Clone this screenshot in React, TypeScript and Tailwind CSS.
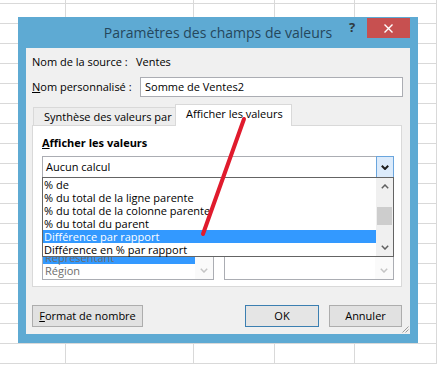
import React from "react";

const sheetCols = [0, 1, 2, 3, 4];
const sheetRows = Array.from({ length: 19 }, (_, i) => i);

const options = [
  "% de",
  "% du total de la ligne parente",
  "% du total de la colonne parente",
  "% du total du parent",
  "Différence par rapport",
  "Différence en % par rapport",
];
const selected = 4;

function Chevron({ up = false, color = "#606060", w = 8, h = 5, sw = 1.5 }: { up?: boolean; color?: string; w?: number; h?: number; sw?: number }) {
  return (
    <svg width={w} height={h} viewBox="0 0 8 5" fill="none">
      <path d={up ? "M0.8 4.2 L4 1 L7.2 4.2" : "M0.8 0.8 L4 4 L7.2 0.8"} stroke={color} strokeWidth={sw} />
    </svg>
  );
}

function ListBox({ items, width }: { items: { label: string; active?: boolean }[]; width?: string }) {
  return (
    <div className={`flex border border-[#abadb3] bg-white ${width ?? "flex-1"}`}>
      <div className="flex-1 flex flex-col justify-end pb-[2px]">
        {items.map((it) => (
          <div
            key={it.label}
            className={`h-[13px] leading-[13px] pl-[2px] text-[#6d6d6d] ${it.active ? "bg-[#3399ff]" : ""}`}
          >
            {it.label}
          </div>
        ))}
      </div>
      <div className="w-[18px] bg-[#fafafa] flex flex-col justify-end items-center pb-[6px]">
        <Chevron color="#c4c4c4" />
      </div>
    </div>
  );
}

export default function App() {
  return (
    <div className="relative w-[437px] h-[365px] overflow-hidden bg-white font-['Open_Sans',sans-serif] text-[11px] text-black">
      {/* Excel sheet behind the dialog */}
      <div className="grid grid-cols-[66px_128px_81px_80px_1fr] grid-rows-[4px_repeat(18,20px)]">
        {sheetRows.map((r) =>
          sheetCols.map((c) => <div key={`${r}-${c}`} className="border-r border-b border-[#d9d9d9]" />)
        )}
      </div>

      {/* Dialog window */}
      <div className="absolute left-[18px] top-[17px] w-[400px] h-[326px] flex flex-col bg-[#5eaad3] px-[8px] pb-[9px]">
        {/* Title bar */}
        <div className="h-[31px] flex items-start">
          <div className="w-[68px]" />
          <div className="flex-1 h-[31px] flex items-center justify-center text-[14px] text-[#25475c]">
            Paramètres des champs de valeurs
          </div>
          <div className="w-[68px] flex items-start">
            <div className="w-[20px] mr-[5px] h-[22px] flex items-center justify-center text-[13px] font-bold text-[#2f3a40]">?</div>
            <div className="mt-[1px] w-[43px] h-[20px] bg-[#c75050] flex items-center justify-center">
              <svg width="9" height="9" viewBox="0 0 9 9">
                <path d="M0.5 0.5 L8.5 8.5 M8.5 0.5 L0.5 8.5" stroke="#fff" strokeWidth="1.4" />
              </svg>
            </div>
          </div>
        </div>

        {/* Client area */}
        <div className="relative flex-1 flex flex-col bg-[#f0f0f0] pl-[6px] pr-[8px]">
          <div className="h-[28px] flex items-center">
            <span className="w-[104px]">Nom de la source :</span>
            <span>Ventes</span>
          </div>
          <div className="mt-[1px] h-[20px] flex items-center">
            <span className="w-[108px]">
              <span className="underline">N</span>om personnalisé :
            </span>
            <div className="flex-1 h-[20px] -mr-px border border-[#abadb3] bg-white pl-[4px] flex items-center">
              Somme de Ventes2
            </div>
          </div>

          {/* Tabs */}
          <div className="mt-[7px] h-[22px] flex items-end pl-[1px]">
            <div className="w-[143px] h-[19px] border border-b-0 border-[#d9d9d9] bg-[#ededed] pl-[10px] flex items-center">
              Synthèse des valeurs par
            </div>
            <div className="relative z-10 -ml-px w-[117px] h-[22px] border border-b-0 border-[#d9d9d9] bg-white pl-[10px] pb-[3px] flex items-center">
              Afficher les valeurs
            </div>
          </div>

          {/* Tab panel */}
          <div className="relative -mt-px h-[162px] border border-[#d9d9d9] bg-white flex flex-col pt-[9px] pl-[9px] pr-[7px]">
            <div className="h-[16px] flex items-center font-bold">
              <span className="underline">A</span>fficher les valeurs
            </div>
            <div className="mt-[5px] h-[22px] flex border border-[#abadb3] bg-white">
              <div className="flex-1 pl-[3px] flex items-center">Aucun calcul</div>
              <div className="-my-px -mr-px w-[18px] h-[22px] border border-[#6aa5dd] bg-[#dcebfb] flex items-center justify-center">
                <Chevron color="#1e1e1e" sw={2} />
              </div>
            </div>
            <div className="mt-[24px] mb-[6px] flex-1 flex gap-[10px]">
              <ListBox
                width="w-[172px]"
                items={[
                  { label: "Représentant", active: true },
                  { label: "Région" },
                ]}
              />
              <ListBox items={[]} />
            </div>

            {/* Open drop-down list */}
            <div className="absolute z-20 left-[9px] top-[51px] w-[352px] h-[80px] flex border border-[#646464] bg-white">
              <div className="flex-1 flex flex-col">
                {options.map((o, i) => (
                  <div
                    key={o}
                    className={`h-[13px] leading-[13px] pl-[1px] whitespace-nowrap ${i === selected ? "bg-[#3399ff] text-white" : ""}`}
                  >
                    {o}
                  </div>
                ))}
              </div>
              <div className="w-[17px] bg-[#f0f0f0] flex flex-col">
                <div className="h-[17px] flex items-center justify-center">
                  <Chevron up />
                </div>
                <div className="flex-1 pt-[12px] px-[1px]">
                  <div className="h-[18px] bg-[#cdcdcd]" />
                </div>
                <div className="h-[17px] flex items-center justify-center">
                  <Chevron />
                </div>
              </div>
            </div>
          </div>

          {/* Buttons */}
          <div className="mt-[18px] h-[22px] flex">
            <div className="w-[111px] border border-[#adadad] bg-[#e1e1e1] flex items-center justify-center">
              <span className="underline">F</span>ormat de nombre
            </div>
            <div className="ml-auto w-[74px] border border-[#3c7fb1] bg-[#e5e5e5] flex items-center justify-center">OK</div>
            <div className="ml-[10px] w-[73px] border border-[#adadad] bg-[#e1e1e1] flex items-center justify-center">Annuler</div>
          </div>

          {/* Resize grip */}
          <svg className="absolute right-[1px] bottom-[1px]" width="7" height="7" viewBox="0 0 7 7">
            <path d="M6.5 0.5 L0.5 6.5 M6.5 3.5 L3.5 6.5" stroke="#9a9a9a" strokeWidth="1" />
          </svg>
        </div>
      </div>

      {/* Red annotation stroke */}
      <svg className="absolute left-0 top-0 z-50 pointer-events-none" width="437" height="365">
        <line x1="244" y1="119" x2="203" y2="234" stroke="#e01b2d" strokeWidth="4" strokeLinecap="round" />
      </svg>
    </div>
  );
}
